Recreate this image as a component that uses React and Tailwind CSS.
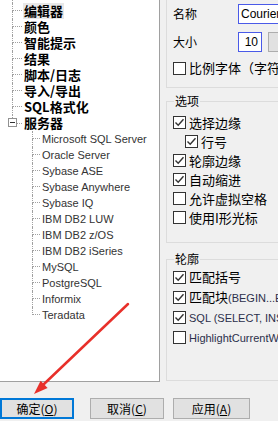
import React from "react";

const cjk = { fontFamily: '"Noto Sans CJK SC", "Noto Sans", sans-serif' };
const latin = { fontFamily: '"Liberation Sans", Arial, sans-serif' };

const topItems = ["编辑器", "颜色", "智能提示", "结果", "脚本/日志", "导入/导出", "SQL格式化"];
const servers = [
    "Microsoft SQL Server",
    "Oracle Server",
    "Sybase ASE",
    "Sybase Anywhere",
    "Sybase IQ",
    "IBM DB2 LUW",
    "IBM DB2 z/OS",
    "IBM DB2 iSeries",
    "MySQL",
    "PostgreSQL",
    "Informix",
    "Teradata",
];

const dots = "border-dotted border-[#a0a0a0]";

const Connector = ({ last, width }) => (
    <div className={`flex h-4 flex-col ${width}`}>
        <div className={`h-2 border-l border-b ${dots}`} />
        <div className={`h-2 ${last ? "" : "border-l"} ${dots}`} />
    </div>
);

const Check = ({ checked }) => (
    <div className="flex h-[13px] w-[13px] shrink-0 items-center justify-center border border-[#333] bg-white">
        {checked && (
            <svg width="11" height="11" viewBox="0 0 11 11">
                <polyline points="1.5,5.5 4.2,8.2 9.5,2.2" fill="none" stroke="#333" strokeWidth="1.4" />
            </svg>
        )}
    </div>
);

const CheckRow = ({ checked, indent, children }) => (
    <div className={`flex h-full items-center ${indent ? "pl-[12px]" : ""}`}>
        <Check checked={checked} />
        <span className="ml-[3px] whitespace-nowrap text-[13px] leading-4 text-black" style={cjk}>
            {children}
        </span>
    </div>
);

const Small = ({ children }) => (
    <span className="text-[11px] text-[#2b2f4a]" style={latin}>
        {children}
    </span>
);

const Btn = ({ label, k, primary, className }) => (
    <button
        className={`flex h-[21px] items-center justify-center bg-[#e1e1e1] text-[12px] text-black ${
            primary ? "border-2 border-[#0078d7]" : "border border-[#adadad]"
        } ${className}`}
        style={cjk}
    >
        {label}(<span className="underline">{k}</span>)
    </button>
);

export default function App() {
    return (
        <div className="relative flex h-[421px] w-[278px] flex-col overflow-hidden bg-[#f0f0f0]">
            <div className="flex h-[382px]">
                {/* tree */}
                <div className="h-[382px] w-[160px] shrink-0 border-r border-b border-[#a0a0a0] bg-white">
                    <div className={`ml-[12px] h-[3px] border-l ${dots}`} />
                    {topItems.map((t, i) => (
                        <div key={t} className="flex h-4 items-center">
                            <div className="ml-[12px]">
                                <Connector width="w-[10px]" />
                            </div>
                            <span
                                className={`ml-px px-px text-[13px] font-bold leading-4 text-black ${
                                    i === 0 ? "bg-[#e8e8e8]" : ""
                                }`}
                                style={cjk}
                            >
                                {t}
                            </span>
                        </div>
                    ))}
                    <div className="flex h-4 items-center">
                        <div className="ml-[8px] flex h-4 w-[9px] flex-col items-center">
                            <div className={`h-[3px] w-0 border-l ${dots}`} />
                            <div className="flex h-[9px] w-[9px] items-center justify-center border border-[#919191] bg-white">
                                <div className="h-px w-[5px] bg-[#333]" />
                            </div>
                        </div>
                        <div className={`w-[5px] border-b ${dots}`} />
                        <span className="ml-px px-px text-[13px] font-bold leading-4 text-black" style={cjk}>
                            服务器
                        </span>
                    </div>
                    {servers.map((s, i) => (
                        <div key={s} className="flex h-4 items-center">
                            <div className="ml-[32px]">
                                <Connector width="w-[8px]" last={i === servers.length - 1} />
                            </div>
                            <span className="ml-[2px] whitespace-nowrap text-[11px] leading-4 text-[#333]" style={latin}>
                                {s}
                            </span>
                        </div>
                    ))}
                </div>

                {/* options */}
                <div className="flex w-[160px] shrink-0 flex-col pl-[6px]">
                    <div className="h-[88px] border-x border-b border-[#dcdcdc] pl-[6px] pt-[4px]">
                        <div className="flex h-[20px] items-center">
                            <span className="w-[65px] text-[12px] text-black" style={cjk}>名称</span>
                            <div className="flex h-[20px] w-[70px] items-center border border-[#4a5ae8] bg-white pl-[2px] text-[12px] text-black" style={latin}>
                                Courier
                            </div>
                        </div>
                        <div className="mt-[8px] flex h-[20px] items-center">
                            <span className="w-[65px] text-[12px] text-black" style={cjk}>大小</span>
                            <div className="flex h-[20px] w-[24px] items-center justify-end border border-[#4a5ae8] bg-white pr-[3px] text-[12px] text-black" style={latin}>
                                10
                            </div>
                            <div className="ml-[6px] h-[20px] w-[30px] border border-[#adadad] bg-[#e1e1e1]" />
                        </div>
                        <div className="mt-[6px] h-[20px]">
                            <CheckRow>比例字体（字符宽度不同）</CheckRow>
                        </div>
                    </div>

                    <fieldset className="mt-[5px] border border-[#dcdcdc] pl-[6px] pb-[15px]">
                        <legend className="ml-px px-px text-[12px] leading-4 text-black" style={cjk}>选项</legend>
                        <div className="flex flex-col pt-[4px]">
                            <div className="h-[19px]"><CheckRow checked>选择边缘</CheckRow></div>
                            <div className="h-[19px]"><CheckRow checked indent>行号</CheckRow></div>
                            <div className="h-[19px]"><CheckRow checked>轮廓边缘</CheckRow></div>
                            <div className="h-[19px]"><CheckRow checked>自动缩进</CheckRow></div>
                            <div className="h-[19px]"><CheckRow>允许虚拟空格</CheckRow></div>
                            <div className="h-[19px]"><CheckRow>使用I形光标</CheckRow></div>
                        </div>
                    </fieldset>

                    <fieldset className="mt-[8px] border border-[#dcdcdc] pl-[6px] pb-[33px]">
                        <legend className="ml-px px-px text-[12px] leading-4 text-black" style={cjk}>轮廓</legend>
                        <div className="flex flex-col">
                            <div className="h-[20px]"><CheckRow checked>匹配括号</CheckRow></div>
                            <div className="h-[20px]"><CheckRow checked>匹配块<Small>(BEGIN...END)</Small></CheckRow></div>
                            <div className="h-[20px]"><CheckRow checked><Small>SQL (SELECT, INSERT, ...)</Small></CheckRow></div>
                            <div className="h-[20px]"><CheckRow><Small>HighlightCurrentWord</Small></CheckRow></div>
                        </div>
                    </fieldset>
                </div>
            </div>

            <div className="mt-[16px] flex">
                <Btn label="确定" k="O" primary className="w-[74px]" />
                <Btn label="取消" k="C" className="ml-[16px] w-[74px]" />
                <Btn label="应用" k="A" className="ml-[9px] w-[77px]" />
            </div>

            <svg className="pointer-events-none absolute left-0 top-0" width="278" height="421">
                <line x1="128" y1="304" x2="44" y2="384" stroke="#e8302a" strokeWidth="2.5" strokeLinecap="round" />
                <polygon points="34,394 47.6,387.9 40.6,380.7" fill="#e8302a" />
            </svg>
        </div>
    );
}
